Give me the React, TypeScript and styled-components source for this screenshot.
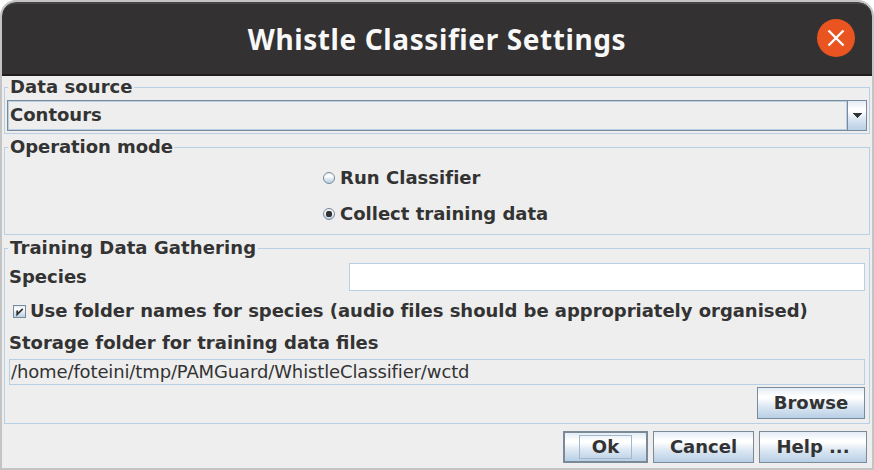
import React from "react";
import styled, { createGlobalStyle, css } from "styled-components";

const GlobalStyle = createGlobalStyle`
  *, *::before, *::after { box-sizing: border-box; }
  html, body { margin: 0; padding: 0; background: #fff; overflow: hidden; }
`;

const line = "#b8cfe5";
const edge = "#7a8a99";
const ink = "#333333";
const metal = "linear-gradient(to bottom, #e3ecf5 0%, #ffffff 28%, #ffffff 34%, #dde8f3 60%, #b8cfe5 100%)";

const Window = styled.main`
  display: flex;
  flex-direction: column;
  width: 874px;
  height: 470px;
  overflow: hidden;
  border: 2px solid #c4c4c4;
  border-radius: 16px 16px 0 0;
  background: #eeeeee;
  color: ${ink};
  font: bold 18px/20px "DejaVu Sans", sans-serif;
  white-space: nowrap;
`;

const TitleBar = styled.header`
  display: grid;
  grid-template-columns: 56px 1fr 56px;
  align-items: start;
  height: 74px;
  flex: none;
  border-top: 2px solid #474546;
  border-bottom: 2px solid #211c1f;
  border-radius: 14px 14px 0 0;
  background: #333132;
`;

const Title = styled.h1`
  grid-column: 2;
  margin: 0;
  padding-top: 18px;
  text-align: center;
  color: #f8f8f8;
  font: bold 28px/34px "Noto Sans", sans-serif;
  letter-spacing: 0.6px;
`;

const CloseButton = styled.button`
  width: 38px;
  height: 38px;
  margin: 15px 0 0 1px;
  padding: 0;
  border: 0;
  border-radius: 50%;
  background: #e95420;
  svg { display: block; }
`;

const Group = styled.section<{ $height: number; $top: number }>`
  display: flex;
  flex-direction: column;
  flex: none;
  height: ${(p) => p.$height}px;
  margin: ${(p) => p.$top}px 2px 0;
  border: 1px solid ${line};
`;

const GroupTitle = styled.h2<{ $width: number }>`
  flex: none;
  width: ${(p) => p.$width}px;
  height: 20px;
  margin: -11px 0 0 3px;
  padding-left: 2px;
  background: #eeeeee;
  font: inherit;
`;

const ComboBox = styled.div`
  display: flex;
  height: 31px;
  margin: 3px 2px 0;
  border: 1px solid ${edge};
`;

const ComboValue = styled.div`
  flex: 1;
  padding: 3px 2px 0 1px;
  border: 1px solid ${line};
`;

const ComboArrow = styled.div`
  display: flex;
  align-items: center;
  justify-content: center;
  width: 19px;
  border-left: 1px solid ${edge};
  background: ${metal};
`;

const RadioList = styled.div`
  display: flex;
  flex-direction: column;
  padding: 3px 0 0 318px;
`;

const Option = styled.label`
  display: flex;
  align-items: center;
  gap: 5px;
  height: 36px;
`;

const RadioDot = styled.span<{ $on?: boolean }>`
  display: flex;
  flex: none;
  align-items: center;
  justify-content: center;
  width: 12px;
  height: 12px;
  border: 1px solid ${edge};
  border-radius: 50%;
  background: ${metal};
  ${(p) =>
    p.$on &&
    css`
      &::after {
        content: "";
        width: 6px;
        height: 6px;
        border-radius: 2px;
        background: ${ink};
      }
    `}
`;

const FieldRow = styled.div`
  display: grid;
  grid-template-columns: 340px 1fr;
  align-items: center;
  height: 28px;
  margin: 5px 4px 0;
`;

const SpeciesInput = styled.input`
  width: 100%;
  height: 28px;
  border: 1px solid ${line};
  background: #fff;
  outline: none;
`;

const CheckRow = styled.label`
  display: flex;
  align-items: flex-start;
  gap: 4px;
  height: 29px;
  margin: 6px 0 0 8px;
  padding-top: 4px;
`;

const CheckBox = styled.span`
  display: flex;
  flex: none;
  width: 13px;
  height: 13px;
  margin-top: 4px;
  border: 1px solid ${edge};
  background: ${metal};
`;

const StorageLabel = styled.div`
  margin: 7px 4px 0;
`;

const PathField = styled.div`
  height: 26px;
  margin: 6px 4px 0;
  padding: 2px 1px;
  border: 1px solid ${line};
  font-weight: normal;
`;

const ButtonRow = styled.div<{ $top: number; $right: number }>`
  display: flex;
  justify-content: flex-end;
  gap: 5px;
  margin: ${(p) => p.$top}px ${(p) => p.$right}px 0 0;
`;

const PushButton = styled.button<{ $width: number; $primary?: boolean }>`
  display: flex;
  align-items: center;
  justify-content: center;
  width: ${(p) => p.$width}px;
  height: 32px;
  padding: 0;
  border: ${(p) => (p.$primary ? 2 : 1)}px solid ${edge};
  background: ${metal};
  color: ${ink};
  font: inherit;
`;

const FocusRing = styled.span`
  width: 53px;
  height: 24px;
  border: 1px solid #a3b8cc;
  line-height: 22px;
`;

const Text = styled.span<{ $spacing?: number }>`
  letter-spacing: ${(p) => p.$spacing ?? 0}px;
`;

export default function App() {
  return (
    <>
      <GlobalStyle />
      <Window>
        <TitleBar>
          <Title>Whistle Classifier Settings</Title>
          <CloseButton aria-label="Close">
            <svg width="38" height="38" viewBox="0 0 38 38">
              <path d="M11.5 11.5 26.5 26.5M26.5 11.5 11.5 26.5" stroke="#fff" strokeWidth="2.4" />
            </svg>
          </CloseButton>
        </TitleBar>

        <Group $top={11} $height={47}>
          <GroupTitle $width={126}><Text $spacing={0.08}>Data source</Text></GroupTitle>
          <ComboBox>
            <ComboValue><Text>Contours</Text></ComboValue>
            <ComboArrow>
              <svg width="10" height="5" viewBox="0 0 10 5" shapeRendering="crispEdges">
                <path d="M0 0H10L5 5Z" fill={ink} />
              </svg>
            </ComboArrow>
          </ComboBox>
        </Group>

        <Group $top={13} $height={88}>
          <GroupTitle $width={166}><Text $spacing={-0.07}>Operation mode</Text></GroupTitle>
          <RadioList>
            <Option><RadioDot /><Text $spacing={0.04}>Run Classifier</Text></Option>
            <Option><RadioDot $on /><Text>Collect training data</Text></Option>
          </RadioList>
        </Group>

        <Group $top={13} $height={176}>
          <GroupTitle $width={250}><Text $spacing={0.1}>Training Data Gathering</Text></GroupTitle>
          <FieldRow>
            <Text>Species</Text>
            <SpeciesInput aria-label="Species" />
          </FieldRow>
          <CheckRow>
            <CheckBox>
              <svg width="11" height="11" viewBox="0 0 11 11">
                <path d="M3.2 4.5V8.4L8.8 2.8" fill="none" stroke={ink} strokeWidth="1.8" />
              </svg>
            </CheckBox>
            <Text $spacing={-0.025}>Use folder names for species (audio files should be appropriately organised)</Text>
          </CheckRow>
          <StorageLabel><Text>Storage folder for training data files</Text></StorageLabel>
          <PathField><Text $spacing={-0.13}>/home/foteini/tmp/PAMGuard/WhistleClassifier/wctd</Text></PathField>
          <ButtonRow $top={2} $right={4}>
            <PushButton $width={108}><Text>Browse</Text></PushButton>
          </ButtonRow>
        </Group>

        <ButtonRow $top={7} $right={5}>
          <PushButton $width={85} $primary><FocusRing>Ok</FocusRing></PushButton>
          <PushButton $width={101}><Text>Cancel</Text></PushButton>
          <PushButton $width={108}><Text>Help ...</Text></PushButton>
        </ButtonRow>
      </Window>
    </>
  );
}
